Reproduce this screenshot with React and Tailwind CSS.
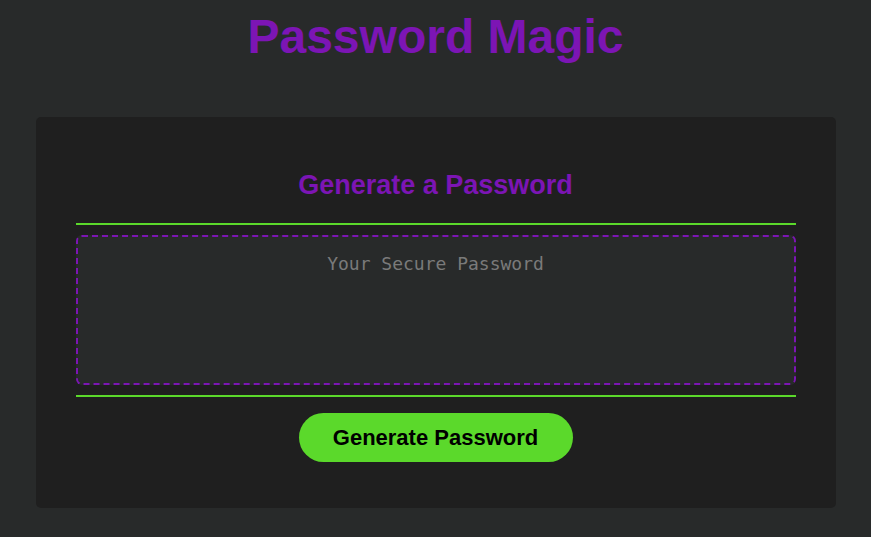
export default function App() {
  return (
    <div className="min-h-[537px] bg-[#282a2a] font-['Liberation_Sans',Arial,sans-serif] pt-[10px] pb-[29px]">
      <h1 className="text-center text-[48px] leading-[54px] font-bold text-[#7c15b4]">Password Magic</h1>
      <div className="mx-auto mt-[53px] w-[800px] rounded-[5px] bg-[#1f1f1f] px-10 pt-[30px] pb-[46px]">
        <div className="border-b-2 border-[#5bd92b]">
          <h2 className="mt-[23px] mb-[22px] text-center text-[27px] leading-[31px] font-bold text-[#7c15b4]">Generate a Password</h2>
        </div>
        <div className="py-[10px]">
          <textarea
            readOnly
            placeholder="Your Secure Password"
            className="block h-[150px] w-full resize-none rounded-md border-2 border-dashed border-[#7c15b4] bg-[#282a2a] px-4 pt-[16px] text-center font-['DejaVu_Sans_Mono',monospace] text-[18px] leading-[21px] text-[#cfcfcf] outline-none placeholder:text-[#7a7a7a]"
          />
        </div>
        <div className="flex justify-center border-t-2 border-[#5bd92b] pt-4">
          <button className="h-[49px] w-[274px] rounded-full bg-[#5bd92b] text-[22px] font-bold text-black">Generate Password</button>
        </div>
      </div>
    </div>
  );
}
